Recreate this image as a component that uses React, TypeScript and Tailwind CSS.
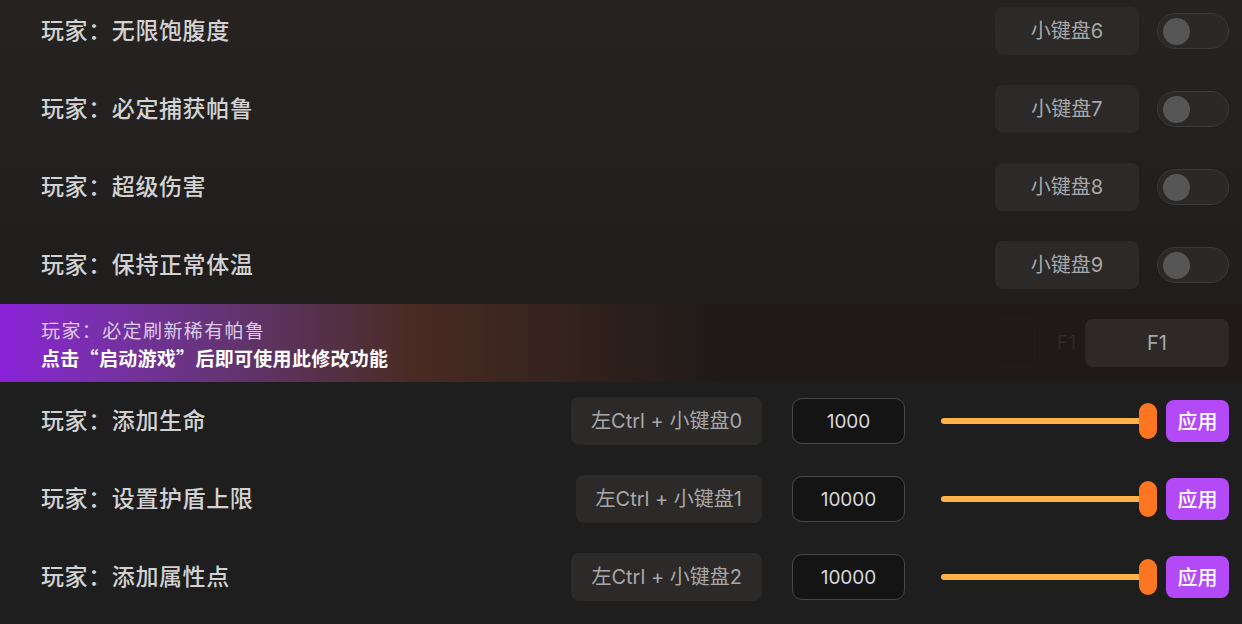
import React from "react";

const toggleRows = [
  { label: "玩家：无限饱腹度", key: "小键盘6" },
  { label: "玩家：必定捕获帕鲁", key: "小键盘7" },
  { label: "玩家：超级伤害", key: "小键盘8" },
  { label: "玩家：保持正常体温", key: "小键盘9" },
];

const valueRows = [
  { label: "玩家：添加生命", key: "左Ctrl + 小键盘0", value: "1000" },
  { label: "玩家：设置护盾上限", key: "左Ctrl + 小键盘1", value: "10000" },
  { label: "玩家：添加属性点", key: "左Ctrl + 小键盘2", value: "10000" },
];

const latin = { fontFamily: 'Inter, "Noto Sans CJK SC", sans-serif' };

function Toggle() {
  return (
    <div className="w-[72px] h-[36px] rounded-full bg-[#2a2928] border border-[#3a3938] flex items-center px-[5px]">
      <div className="w-[27px] h-[27px] rounded-full bg-[#565656]" />
    </div>
  );
}

function KeyBox({ children, className = "" }: { children: React.ReactNode; className?: string }) {
  return (
    <div
      style={latin}
      className={
        "h-[48px] rounded-lg bg-[#2b2a29] text-[#a8a8a8] text-[20px] flex items-center justify-center " +
        className
      }
    >
      {children}
    </div>
  );
}

function Slider() {
  return (
    <div className="w-[216px] flex items-center">
      <div className="flex-1 h-[6px] rounded-full bg-[#ffb347]" />
      <div className="w-[18px] h-[36px] -ml-[9px] rounded-full bg-[#ff7622]" />
    </div>
  );
}

function Label({ children }: { children: React.ReactNode }) {
  return (
    <div className="flex-1 -translate-y-[2px] text-[23px] font-medium text-[#d2d2d2] tracking-[0.6px]">
      {children}
    </div>
  );
}

export default function App() {
  return (
    <div
      className="w-[1242px] h-[624px] overflow-hidden bg-[#1e1e1e]"
      style={{ fontFamily: '"Noto Sans CJK SC", "Noto Sans", sans-serif' }}
    >
      <div className="-mt-2">
        {/* toggle rows */}
        <div className="bg-gradient-to-b from-[#262321] to-[#1f1e1d]">
          {toggleRows.map((r) => (
            <div key={r.label} className="h-[78px] flex items-center pl-[41px] pr-[13px]">
              <Label>{r.label}</Label>
              <KeyBox className="w-[144px]">{r.key}</KeyBox>
              <div className="w-[18px]" />
              <Toggle />
            </div>
          ))}
        </div>

        {/* banner row */}
        <div className="h-[78px] flex items-center pl-[41px] pr-[13px] bg-gradient-to-r from-[#8a20d8] via-[#4a2b23] via-[33%] to-[#1f1a18] to-[58%]">
          <div className="flex-1 flex flex-col">
            <span className="text-[19px] leading-[28px] tracking-[1.4px] text-[#dccbe9]">玩家：必定刷新稀有帕鲁</span>
            <span className="text-[19px] leading-[27px] tracking-[0.3px] font-bold text-white">点击“启动游戏”后即可使用此修改功能</span>
          </div>
          <div className="w-[40px] h-[48px] rounded-md border border-[#221d1c]" />
          <span style={latin} className="ml-[22px] mr-[9px] text-[19px] text-[#2e2826]">
            F1
          </span>
          <KeyBox className="w-[144px] bg-[#2e2926] text-[#a3a3a3]">F1</KeyBox>
        </div>

        {/* value rows */}
        {valueRows.map((r) => (
          <div key={r.label} className="h-[78px] flex items-center pl-[41px] pr-[13px]">
            <Label>{r.label}</Label>
            <KeyBox className="px-[20px]">{r.key}</KeyBox>
            <div
              style={latin}
              className="ml-[30px] w-[113px] h-[46px] rounded-[10px] bg-[#141414] border border-[#474747] flex items-center justify-center text-[19px] text-[#d8d8d8]"
            >
              <span className="translate-y-[1px]">{r.value}</span>
            </div>
            <div className="ml-[36px]">
              <Slider />
            </div>
            <button className="ml-[9px] w-[63px] h-[42px] rounded-lg bg-[#b44af7] text-white text-[20px] font-medium flex items-center justify-center">
              应用
            </button>
          </div>
        ))}
      </div>
    </div>
  );
}
